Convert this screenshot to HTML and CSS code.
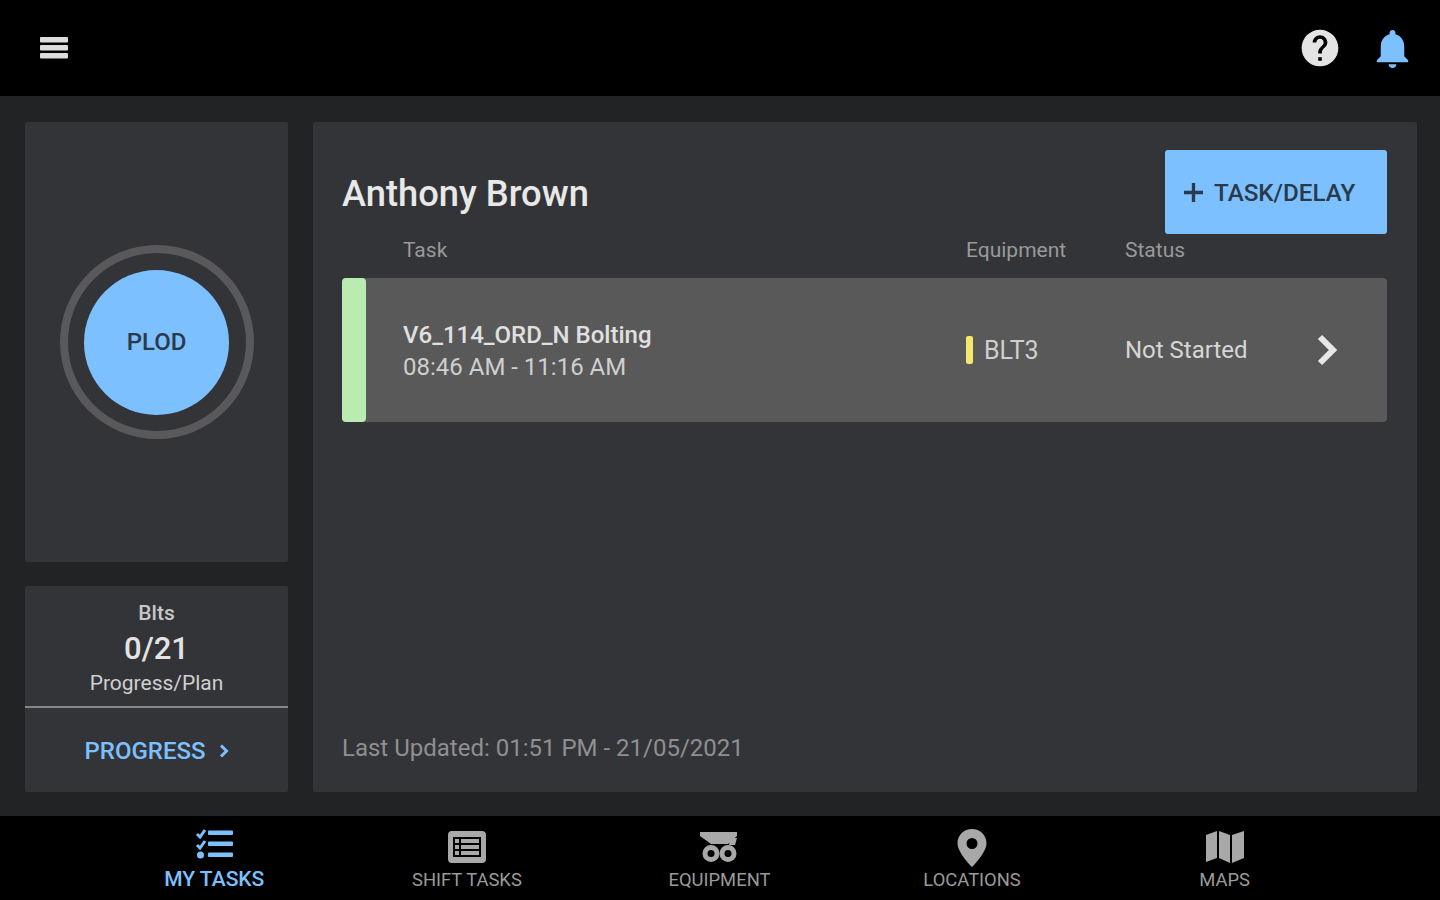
FILE: index.html
```html
<!DOCTYPE html>
<html lang="en">
<head>
  <meta charset="UTF-8" />
  <meta name="viewport" content="width=device-width, initial-scale=1.0" />
  <title>My Tasks</title>
  <link rel="stylesheet" href="styles.css">
</head>
<body>
  <header class="topbar">
    <svg class="menu-icon" viewBox="0 0 28 22" aria-label="Menu">
      <rect x="0" y="0" width="28" height="5.5" rx="1"/>
      <rect x="0" y="8" width="28" height="5.5" rx="1"/>
      <rect x="0" y="16" width="28" height="5.5" rx="1"/>
    </svg>
    <div class="topbar-actions">
      <svg class="help-icon" viewBox="0 0 24 24" aria-label="Help">
        <path d="M12 2C6.48 2 2 6.48 2 12s4.48 10 10 10 10-4.48 10-10S17.52 2 12 2zm1 17h-2v-2h2v2zm2.07-7.75l-.9.92C13.45 12.9 13 13.5 13 15h-2v-.5c0-1.1.45-2.1 1.17-2.83l1.24-1.26c.37-.36.59-.86.59-1.41 0-1.1-.9-2-2-2s-2 .9-2 2H8c0-2.21 1.79-4 4-4s4 1.79 4 4c0 .88-.36 1.68-.93 2.25z"/>
      </svg>
      <svg class="bell-icon" viewBox="0 0 24 24" aria-label="Notifications">
        <path d="M12 22c1.1 0 2-.9 2-2h-4c0 1.1.89 2 2 2zm6-6v-5c0-3.07-1.64-5.64-4.5-6.32V4c0-.83-.67-1.5-1.5-1.5s-1.5.67-1.5 1.5v.68C7.63 5.36 6 7.92 6 11v5l-2 2v1h16v-1l-2-2z"/>
      </svg>
    </div>
  </header>

  <main class="content">
    <aside class="side">
      <section class="card plod-card">
        <div class="plod-ring">
          <div class="plod-button">PLOD</div>
        </div>
      </section>
      <section class="card progress-card">
        <div class="progress-stats">
          <div class="stat-label">Blts</div>
          <div class="stat-value">0/21</div>
          <div class="stat-caption">Progress/Plan</div>
        </div>
        <div class="progress-link">
          <span>PROGRESS</span>
          <svg class="progress-chevron" viewBox="0 0 10 14"><path d="M2 1.500 7.500 7 2 12.500"/></svg>
        </div>
      </section>
    </aside>

    <section class="card tasks">
      <div class="tasks-head">
        <h1>Anthony Brown</h1>
        <button class="add-btn">
          <svg class="plus-icon" viewBox="0 0 20 20"><path d="M10 0v20M0 10h20"/></svg>
          <span>TASK/DELAY</span>
        </button>
      </div>
      <div class="columns">
        <span>Task</span>
        <span>Equipment</span>
        <span>Status</span>
      </div>
      <div class="task-row">
        <div class="task-stripe"></div>
        <div class="task-info">
          <div class="task-name">V6_114_ORD_N Bolting</div>
          <div class="task-time">08:46 AM - 11:16 AM</div>
        </div>
        <div class="task-equipment"><i class="equip-mark"></i>BLT3</div>
        <div class="task-status">Not Started</div>
        <svg class="row-chevron" viewBox="0 0 22 32"><path d="M4 3 17 16 4 29"/></svg>
      </div>
      <div class="updated">Last Updated: 01:51 PM - 21/05/2021</div>
    </section>
  </main>

  <nav class="tabs">
    <div class="tab active">
      <svg class="tab-icon" viewBox="0 0 38 32">
        <path class="line" d="M2 6 5 9 10 2"/>
        <path class="line" d="M2 17 5 20 10 13"/>
        <circle cx="5.500" cy="27" r="3.500"/>
        <rect x="13" y="2.500" width="25" height="4.500" rx="1"/>
        <rect x="13" y="13.500" width="25" height="4.500" rx="1"/>
        <rect x="13" y="24.500" width="25" height="4.500" rx="1"/>
      </svg>
      <span>MY TASKS</span>
    </div>
    <div class="tab">
      <svg class="tab-icon" viewBox="0 0 38 32">
        <path fill-rule="evenodd" d="M4 0h30a4 4 0 0 1 4 4v24a4 4 0 0 1-4 4H4a4 4 0 0 1-4-4V4a4 4 0 0 1 4-4zM5 6v20h28V6z"/>
        <rect x="7" y="8" width="4" height="4"/>
        <rect x="7" y="14" width="4" height="4"/>
        <rect x="7" y="20" width="4" height="4"/>
        <rect x="13" y="8" width="18" height="4"/>
        <rect x="13" y="14" width="18" height="4"/>
        <rect x="13" y="20" width="18" height="4"/>
      </svg>
      <span>SHIFT TASKS</span>
    </div>
    <div class="tab">
      <svg class="tab-icon" viewBox="0 0 38 32">
        <path d="M0 1h37v4l-9 8H11L0 5z"/>
        <path d="M30 7h7l-2 7h-6z"/>
        <path fill-rule="evenodd" d="M11 14a8.500 8.500 0 1 1 0 17 8.500 8.500 0 0 1 0-17zm0 5a3.500 3.500 0 1 0 0 7 3.500 3.500 0 0 0 0-7z"/>
        <path fill-rule="evenodd" d="M28 14a8.500 8.500 0 1 1 0 17 8.500 8.500 0 0 1 0-17zm0 5a3.500 3.500 0 1 0 0 7 3.500 3.500 0 0 0 0-7z"/>
      </svg>
      <span>EQUIPMENT</span>
    </div>
    <div class="tab">
      <svg class="tab-icon tall" viewBox="0 0 38 38">
        <path fill-rule="evenodd" d="M19 0c8 0 14.500 6.200 14.500 14C33.500 24 19 38 19 38S4.500 24 4.500 14C4.500 6.200 11 0 19 0zm0 9a5.500 5.500 0 1 0 0 11 5.500 5.500 0 0 0 0-11z"/>
      </svg>
      <span>LOCATIONS</span>
    </div>
    <div class="tab">
      <svg class="tab-icon" viewBox="0 0 38 32">
        <path d="M0 4 11 0v27L0 31z"/>
        <path d="M13 0 24 4v28L13 27z"/>
        <path d="M26 4 38 0v27l-12 5z"/>
      </svg>
      <span>MAPS</span>
    </div>
  </nav>
</body>
</html>
```

FILE: styles.css
```css
:root {
  --bg-color: #212325;
  --card-color: #333437;
  --row-color: #595959;
  --blue: #7cc0ff;
  --dark-text: #2a3a4a;
  --muted: #98999b;
  --text-color: #d6d6d6;
}

* {
  box-sizing: border-box;
}

html, body {
  height: 100%;
}

body {
  margin: 0;
  display: flex;
  flex-direction: column;
  height: 900px;
  overflow: hidden;
  font-family: Roboto, "Liberation Sans", sans-serif;
  background-color: var(--bg-color);
  color: var(--text-color);
}

/* top bar */
.topbar {
  height: 96px;
  flex: none;
  background-color: #000;
  display: flex;
  align-items: center;
  justify-content: space-between;
  padding: 0 24px 0 40px;
}

.menu-icon {
  width: 28px;
  height: 22px;
  fill: #dcdcdc;
}

.topbar-actions {
  display: flex;
  align-items: center;
  gap: 27px;
}

.help-icon {
  width: 44px;
  height: 44px;
  fill: #e4e4e4;
}

.bell-icon {
  width: 47px;
  height: 47px;
  fill: var(--blue);
}

/* main area */
.content {
  flex: 1;
  display: flex;
  gap: 25px;
  padding: 26px 23px 24px 25px;
}

.card {
  background-color: var(--card-color);
  border-radius: 2px;
}

.side {
  width: 263px;
  flex: none;
  display: flex;
  flex-direction: column;
  gap: 24px;
}

.plod-card {
  height: 440px;
  display: flex;
  justify-content: center;
  padding-top: 123px;
}

.plod-ring {
  width: 194px;
  height: 194px;
  border: 8px solid #59595b;
  border-radius: 50%;
  display: flex;
  align-items: center;
  justify-content: center;
}

.plod-button {
  width: 145px;
  height: 145px;
  border-radius: 50%;
  background-color: var(--blue);
  color: var(--dark-text);
  display: flex;
  align-items: center;
  justify-content: center;
  font-size: 24px;
  font-weight: 500;
}

.progress-card {
  flex: 1;
  display: flex;
  flex-direction: column;
  text-align: center;
}

.progress-stats {
  height: 122px;
  padding-top: 16px;
  border-bottom: 2px solid #858688;
}

.stat-label {
  font-size: 21px;
  font-weight: 500;
  line-height: 23px;
  color: #c8c8c8;
}

.stat-value {
  font-size: 31px;
  font-weight: 500;
  line-height: 36px;
  margin-top: 6px;
  color: #e4e4e4;
}

.stat-caption {
  font-size: 21px;
  line-height: 24px;
  margin-top: 4px;
  color: #cfcfcf;
}

.progress-link {
  flex: 1;
  display: flex;
  align-items: center;
  justify-content: center;
  gap: 13px;
  padding-top: 2px;
  font-size: 24px;
  font-weight: 500;
  color: var(--blue);
}

.progress-chevron {
  width: 10px;
  height: 14px;
  fill: none;
  stroke: var(--blue);
  stroke-width: 3;
}

/* task panel */
.tasks {
  flex: 1;
  display: flex;
  flex-direction: column;
  padding: 28px 30px 28px 29px;
}

.tasks-head {
  display: flex;
  align-items: center;
  justify-content: space-between;
  height: 84px;
}

h1 {
  margin: 2px 0 0;
  font-size: 36.300px;
  font-weight: 500;
  color: #e8e8e8;
}

.add-btn {
  width: 222px;
  height: 84px;
  border: none;
  border-radius: 3px;
  background-color: var(--blue);
  color: var(--dark-text);
  font-family: inherit;
  font-size: 24.200px;
  font-weight: 500;
  display: flex;
  align-items: center;
  gap: 11px;
  padding: 0 0 0 19px;
}

.add-btn span {
  padding-top: 2px;
}

.plus-icon {
  width: 19px;
  height: 19px;
  fill: none;
  stroke: var(--dark-text);
  stroke-width: 3.500;
}

.columns {
  display: flex;
  height: 44px;
  padding: 4px 0 0 61px;
  font-size: 21px;
  line-height: 24px;
  color: var(--muted);
}

.columns span:nth-child(1) {
  width: 563px;
}

.columns span:nth-child(2) {
  width: 159px;
}

.task-row {
  height: 144px;
  display: flex;
  align-items: center;
  background-color: var(--row-color);
  border-radius: 4px;
}

.task-stripe {
  width: 24px;
  height: 144px;
  flex: none;
  background-color: #b9ecb1;
  border-radius: 4px;
}

.task-info {
  width: 563px;
  margin-left: 37px;
  padding-top: 2px;
}

.task-name {
  font-size: 24px;
  font-weight: 500;
  line-height: 30px;
  color: #e0e0e0;
}

.task-time {
  font-size: 24px;
  line-height: 30px;
  margin-top: 2px;
  color: #cfcfcf;
}

.task-equipment {
  width: 159px;
  display: flex;
  align-items: center;
  gap: 11px;
  font-size: 25px;
  color: #cfcfcf;
}

.equip-mark {
  width: 7px;
  height: 28px;
  border-radius: 2px;
  background-color: #f4e76c;
}

.task-status {
  width: 191px;
  font-size: 24px;
  color: #d6d6d6;
}

.row-chevron {
  width: 22px;
  height: 32px;
  fill: none;
  stroke: #e8e8e8;
  stroke-width: 6;
}

.updated {
  margin-top: auto;
  padding-bottom: 2px;
  font-size: 24px;
  line-height: 28px;
  color: #8e8f91;
}

/* bottom tabs */
.tabs {
  height: 84px;
  flex: none;
  background-color: #000;
  display: flex;
  padding: 0 89px 0 88px;
}

.tab {
  flex: 1;
  display: flex;
  flex-direction: column;
  align-items: center;
  justify-content: flex-end;
  padding-bottom: 8px;
  font-size: 18.400px;
  line-height: 24px;
  color: #9a9a9a;
}

.tab-icon {
  width: 38px;
  height: 34px;
  margin-bottom: 4px;
  fill: #a8a8a8;
}

.tab-icon.tall {
  height: 38px;
  margin-bottom: 1px;
}

.tab.active {
  padding-bottom: 9px;
  font-size: 21px;
  font-weight: 500;
  color: var(--blue);
}

.tab.active .tab-icon {
  margin-bottom: 6px;
  fill: var(--blue);
}

.tab .line {
  fill: none;
  stroke: var(--blue);
  stroke-width: 3;
}
```
